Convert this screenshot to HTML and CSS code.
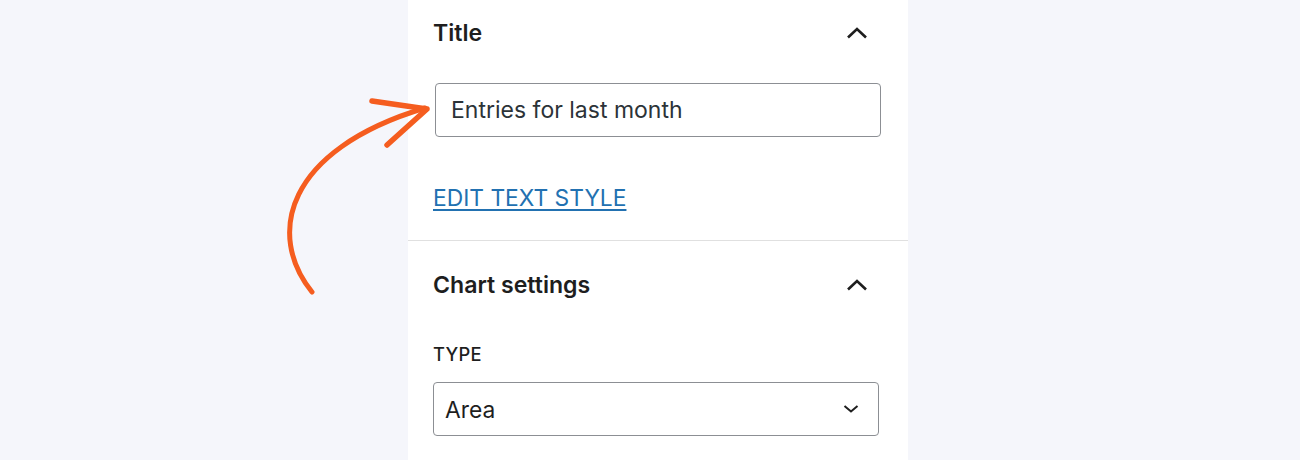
FILE: index.html
```html
<!DOCTYPE html>
<html lang="en">
<head>
<meta charset="utf-8">
<title>Chart block settings</title>
<link rel="stylesheet" href="styles.css">
</head>
<body>
<div class="page">
  <div class="gutter"></div>
  <aside class="panel">
    <section class="section section-first">
      <div class="section-header">
        <h2 class="section-title">Title</h2>
        <svg class="chevron-up" width="24" height="24" viewBox="0 0 24 24" aria-hidden="true"><path d="M3 16.5 L12 8 L21 16.5" fill="none" stroke="#1e1e1e" stroke-width="2.6"/></svg>
      </div>
      <div class="text-input">Entries for last month</div>
      <a class="text-link" href="#">EDIT TEXT STYLE</a>
    </section>
    <section class="section section-second">
      <div class="section-header">
        <h2 class="section-title">Chart settings</h2>
        <svg class="chevron-up" width="24" height="24" viewBox="0 0 24 24" aria-hidden="true"><path d="M3 16.5 L12 8 L21 16.5" fill="none" stroke="#1e1e1e" stroke-width="2.6"/></svg>
      </div>
      <div class="field-label">TYPE</div>
      <div class="select">
        <span>Area</span>
        <svg class="chevron-down" width="16" height="10" viewBox="0 0 16 10" aria-hidden="true"><path d="M1.5 2 L8 7.5 L14.5 2" fill="none" stroke="#1e1e1e" stroke-width="2"/></svg>
      </div>
    </section>
  </aside>
  <div class="gutter"></div>
</div>
<svg class="annotation" width="1300" height="460" viewBox="0 0 1300 460" aria-hidden="true">
  <path d="M312 292 C 266 235, 285 150, 425 108" fill="none" stroke="#f55d1f" stroke-width="5" stroke-linecap="round"/>
  <path d="M372 101 L427 109 L387 145" fill="none" stroke="#f55d1f" stroke-width="5.5" stroke-linecap="round" stroke-linejoin="round"/>
</svg>
</body>
</html>
```
FILE: styles.css
```css
html, body {
  margin: 0;
  padding: 0;
  background: #f5f6fb;
  font-family: Inter, "Noto Sans", "Liberation Sans", sans-serif;
  color: #1e1e1e;
  overflow: hidden;
}

.page {
  display: grid;
  grid-template-columns: 408px 500px 1fr;
  height: 460px;
}

.panel {
  background: #ffffff;
  display: flex;
  flex-direction: column;
}

.section {
  padding: 16px 25px 30px 25px;
  display: flex;
  flex-direction: column;
  align-items: flex-start;
}

.section-second {
  border-top: 1px solid #e0e0e0;
  padding-top: 27px;
}

.section-header {
  align-self: stretch;
  display: flex;
  align-items: center;
  justify-content: space-between;
  height: 34px;
  padding-right: 14px;
}

.section-title {
  margin: 0;
  font-size: 23.1px;
  font-weight: 600;
  line-height: 34px;
  color: #1e1e1e;
}

.chevron-up {
  display: block;
}

.text-input {
  box-sizing: border-box;
  margin: 33px 0 0 2px;
  width: 446px;
  height: 54px;
  border: 1px solid #8c8f94;
  border-radius: 4px;
  padding: 0 15px;
  display: flex;
  align-items: center;
  font-size: 23px;
  color: #2c3338;
}

.text-link {
  margin-top: 49px;
  font-size: 22.8px;
  line-height: 24px;
  color: #2271b1;
  text-decoration: underline;
  text-underline-offset: 3px;
}

.field-label {
  margin-top: 42px;
  font-size: 18.3px;
  font-weight: 500;
  line-height: 20px;
  letter-spacing: 0.3px;
  color: #1e1e1e;
}

.select {
  box-sizing: border-box;
  margin-top: 18px;
  width: 446px;
  height: 54px;
  border: 1px solid #8c8f94;
  border-radius: 4px;
  padding: 0 19px 0 11px;
  display: flex;
  align-items: center;
  justify-content: space-between;
  font-size: 22.8px;
  color: #1e1e1e;
}

.chevron-down {
  display: block;
}

.annotation {
  position: absolute;
  left: 0;
  top: 0;
  pointer-events: none;
}
```
